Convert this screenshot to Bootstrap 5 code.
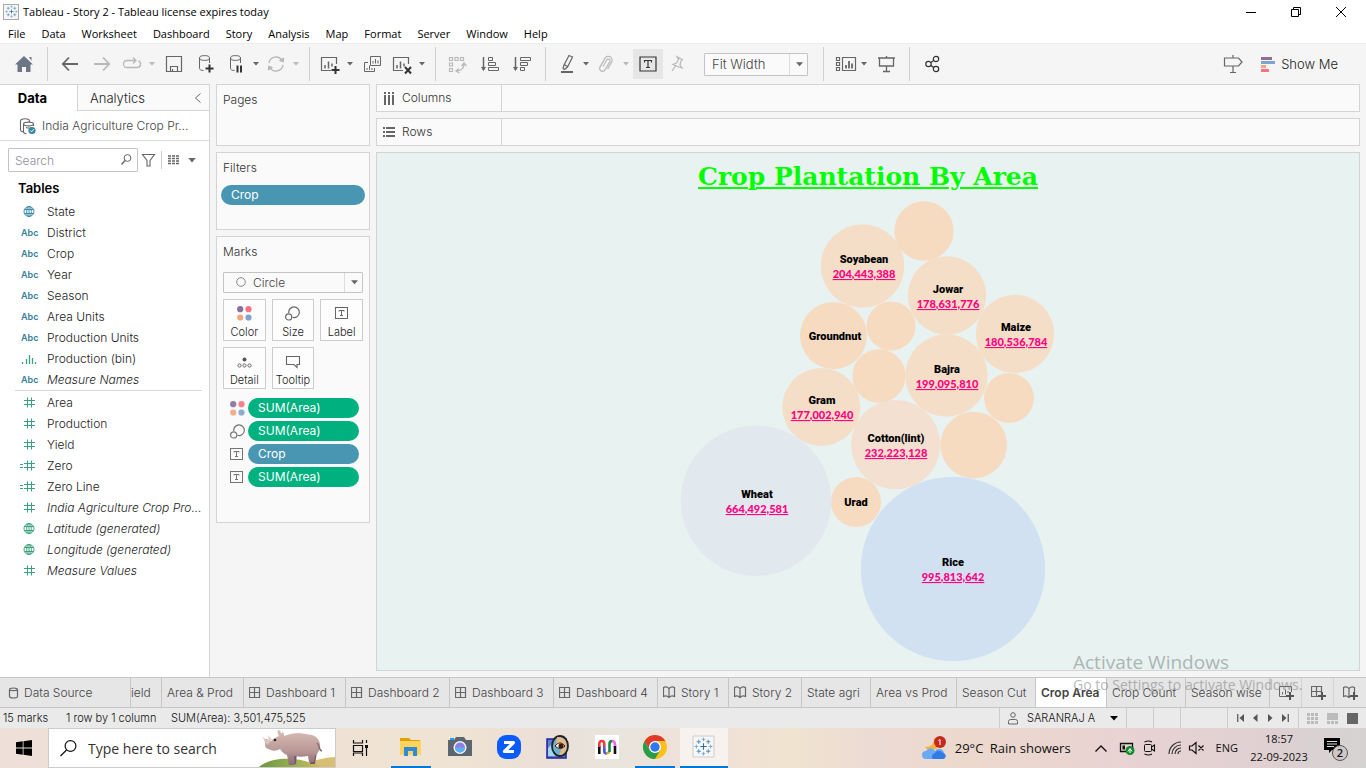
<!DOCTYPE html>
<html lang="en">
<head>
<meta charset="utf-8">
<meta name="viewport" content="width=device-width, initial-scale=1">
<title>Tableau - Story 2</title>
<link href="https://cdn.jsdelivr.net/npm/bootstrap@5.3.0/dist/css/bootstrap.min.css" rel="stylesheet">
<style>
:root{--line:#d4d4d4;--pane:#f5f5f5;--card:#fafafa;--dim:#4996b2;--meas:#00b180;--win:"Open Sans","Noto Sans",sans-serif;--tab:Inter,Roboto,sans-serif}
body{font-family:var(--tab);font-size:12px;font-weight:300;line-height:16px;color:#222;background:var(--pane);height:100vh;overflow:hidden}
svg{display:block;fill:none;stroke:#666;stroke-width:1;overflow:visible;flex:none}
button,.plain{border:0;background:none;padding:0;color:inherit;font:inherit;text-decoration:none}
.winfont{font-family:var(--win);font-weight:400}
.titlebar{height:24px;background:#fff;color:#000;font-size:11px;padding-right:3px}
.titlebar button{width:45px;height:24px}
.menubar{height:19px;background:#fff}
.menubar a{color:#000;text-decoration:none;font-size:11px;line-height:19px}
.toolbar{height:41px;background:var(--pane);border-top:1px solid #ececec}
.toolbar button{height:30px;width:32px;display:flex;align-items:center;justify-content:center}
.toolbar button.slim{width:28px}
.toolbar button.drop{width:12px}
.toolbar button.home{width:47px}
.toolbar button.pressed{width:30px;background:#e6e6e6;margin-left:1px}
.toolbar .off{opacity:.42}
.sep{width:1px;height:34px;background:#d0d0d0;margin:0 6px 0 7px}
.home + .sep{margin-left:0}
.fit{width:104px;height:23px;margin:0 8px 0 13px}
select.pick{appearance:none;width:100%;height:100%;border:1px solid #c4c4c4;border-radius:1px;background:#fafafa;color:#444;padding:0 7px;font-size:13px;font-weight:300;outline:0}
.arrow{right:0;top:1px;bottom:1px;width:19px;border-left:1px solid #dcdcdc;pointer-events:none}
.toolbar button.showme{color:#222;font-size:13px;width:auto;gap:6px;margin-right:28px}
.datapane{width:210px;background:#fff;border-right:1px solid var(--line)}
.dtabs{height:27px}
.dtabs button{height:27px;font-size:13px;color:#222}
.dtabs .t1{width:77px;color:#000;font-weight:700;padding-right:12px;border-top:1px solid var(--line)}
.dtabs .t2{background:var(--card);border:1px solid var(--line);border-right:0;padding-left:12px}
.source{height:30px;border-bottom:1px solid #dedede;padding:0 12px 0 19px;gap:6px;color:#444}
.finder{height:38px;padding:0 8px}
.finder .box{width:130px;height:24px}
.finder input{width:100%;height:100%;border:1px solid #c4c4c4;border-radius:1px;padding:0 24px 0 6px;font-size:12px;font-weight:300;color:#555;outline:0}
.finder input::placeholder{color:#909098;opacity:1}
.finder .lens{right:6px;top:6px}
.bar{width:1px;height:18px;background:#ccc;margin:0 6px}
.tables{font-size:13px;font-weight:600;color:#000;height:22px;line-height:18px;margin:0;padding-left:18px}
.fields{list-style:none;margin:0;padding:0}
.fields li{height:21px;display:flex;align-items:center;padding-right:8px;white-space:nowrap}
.fields .ic{width:47px;padding-left:18px;display:flex;flex:none}
.fields .ic svg{width:21px}
.fields i{font-style:normal;font-weight:600;font-size:9px;line-height:12px;padding-left:3px;color:#3b7f99}
.dimc{stroke:#3b8ba8}.meac{stroke:#3aa27c}
.split{height:1px;background:#d9d9d9;margin:0 7px 1px 15px}
.cards{width:166px;padding:0 6px;gap:6px}
.panel{background:var(--card);border:1px solid var(--line)}
.panel h2{font-size:12px;line-height:16px;font-weight:300;color:#333;margin:0;padding:7px 6px 0}
.pages{height:62px}.filters{height:78px}.marks{height:287px}
.pill{height:20px;border-radius:10px;color:#fff;font-size:12px;line-height:20px;padding:0 10px;text-align:left;font-weight:400}
.pill.dim{background:var(--dim)}.pill.mea{background:var(--meas)}
.filters .pill{margin:9px 4px 0}
.mtype{height:21px;margin:12px 6px 6px}
.mtype select.pick{font-size:12px;padding-left:29px}
.mtype .ring{left:13px;top:5px}
.mgrid{display:grid;grid-template-columns:repeat(3,1fr);gap:6px;margin:0 6px}
.mgrid button{height:42px;border:1px solid #ccc;background:#fdfdfd;font-size:11px;line-height:14px;display:flex;flex-direction:column;align-items:center;justify-content:space-between;padding:6px 0 1px}
.used{list-style:none;margin:9px 10px 0 13px;padding:0;display:grid;gap:3px}
.used li{display:flex;align-items:center;gap:3px}
.used svg{opacity:.9}
.used .pill{flex:1}
.work{gap:6px;padding-right:6px}
.shelf{height:28px;background:var(--card);border:1px solid var(--line)}
.shelf div{width:125px;border-right:1px solid var(--line);padding-left:6px;gap:7px;color:#333}
.viz{background:#e8f3f1;border:1px solid var(--line);margin-bottom:6px}
.viz h1{font:bold 25px/30px "DejaVu Serif",serif;color:#0f0;text-decoration:underline;text-decoration-thickness:2px;text-underline-offset:2px;margin:9px 0 0;text-align:center}
.viz svg{stroke:none;margin:3px auto 0}
.viz .nm{font:900 11px Roboto,sans-serif;fill:#000;text-anchor:middle}
.viz .vl{font:900 11px Lato,sans-serif;fill:#ff0080;text-anchor:middle;text-decoration:underline}
.sheets{display:grid;grid-template-columns:131px 31px 82px 102px 104px 104px 104px 71px 73px 69px 86px 79px 71px 79px 84px 32px 32px 1fr;height:31px;border-top:1px solid #c6c6c6;border-bottom:1px solid #c6c6c6;background:#e6e6e6}
.sheets button{border-right:1px solid #c6c6c6;color:#444;display:flex;align-items:center;gap:5px;padding-left:5px;white-space:nowrap}
.sheets button.on{background:#fff;color:#444;font-weight:600}
.sheets button.src{padding-left:9px;gap:6px}
.sheets button.cut{padding:0}
.sheets button.new{justify-content:center;padding:0;border-color:#d2d2d2}
.status{height:20px;background:#eaeaea;color:#111;font-size:11px;padding-left:3px}
.status .cell{border-left:1px solid #ccc;height:20px}
.s1{width:63px}.s2{width:105px}.user{width:127px}.c27{width:27px}.c47{width:47px}.nav4{width:71px}.view3{width:68px}
.watermark{right:57px;bottom:74px;width:236px;color:#7d8183;opacity:.55;pointer-events:none;font-family:var(--win);font-weight:400}
.watermark b{display:block;font-weight:400;font-size:19px;line-height:28px}
.watermark span{font-size:14px;line-height:18px;display:block}
.taskbar{height:40px;color:#111;background:linear-gradient(90deg,#eedfd8 0,#efe3d3 33%,#ebdfd8 40%,#e8e5dc 45%,#f0e0da 51%,#f0e3cf 58%,#ecdbd5 64%,#ecd9cd 70%,#e9d3d3 82%,#dfd0d2 93%,#d5d3d2 100%)}
.taskbar button{height:40px;display:flex;align-items:center;justify-content:center}
.start{width:48px}.tview{width:48px}
.taskbar .app{width:49px;border-bottom:2px solid transparent}
.taskbar .run{width:40px;margin:0 4px 0 7px;border-color:#0078d7}
.taskbar .run ~ .run{margin:0 5px 0 4px}
.taskbar .act{width:48px;background:#f8f2ef;border-color:#0078d7}
.find{width:288px;height:40px;background:#fff;border:1px solid #ccc}
.find input{border:0;outline:0;width:100%;height:100%;background:none;font-size:14px;padding:0 0 0 39px;color:#222}
.find input::placeholder{color:#333;opacity:1}
.find .glass{left:11px;top:11px}.find .rhino{right:0;bottom:0}
.wx{font-size:13px}
.lang{font-size:11px}
.clock{font-size:11px;line-height:18px;text-align:center;width:74px}
</style>
</head>
<body class="d-flex flex-column">
<svg width="0" height="0" class="position-absolute" aria-hidden="true">
<symbol id="caret" viewBox="0 0 6 4"><path d="M0 0h6L3 3.600z" fill="#666" stroke="none"/></symbol>
<symbol id="globe" viewBox="0 0 21 13"><g transform="translate(6 1)"><circle cx="5" cy="5.500" r="5"/><ellipse cx="5" cy="5.500" rx="2.300" ry="5"/><path d="M.5 3.500h9M.5 7.500h9M5 .5v10"/></g></symbol>
<symbol id="hash" viewBox="0 0 21 13"><path d="M9.500 1.500v10M13.500 1.500v10M6 4.500h11M6 8.500h11"/></symbol>
<symbol id="ehash" viewBox="0 0 21 13"><path d="M9.500 1.500v10M13.500 1.500v10M6 4.500h11M6 8.500h11M2 5.500h3M2 8.500h3"/></symbol>
<symbol id="mark" viewBox="0 0 36 36"><path d="M18 12v12M12 18h12" stroke="#356a93" stroke-width="2"/><path d="M18 1v7M14.500 4.500h7M18 28v7M14.500 31.500h7M1 18h7M4.500 14.500v7M28 18h7M31.500 14.500v7" stroke="#6aa5c9" stroke-width="1.600"/><path d="M9 5v8M5 9h8M27 5v8M23 9h8M9 23v8M5 27h8M27 23v8M23 27h8" stroke="#4b8db5" stroke-width="1.800"/></symbol>
<symbol id="dots" viewBox="0 0 15 15"><g stroke="none"><circle cx="3.200" cy="3.200" r="3.100" fill="#8a6f9c"/><circle cx="11.500" cy="3.200" r="3.100" fill="#f97384"/><circle cx="3.200" cy="11.500" r="3.100" fill="#f4a77c"/><circle cx="11.500" cy="11.500" r="3.100" fill="#7fa3cf"/></g></symbol>
<symbol id="size" viewBox="0 0 15 15"><path d="M3.800 7A5.300 5.300 0 1 1 7.500 11.300" stroke-width="1.200"/><circle cx="3.700" cy="10.900" r="3.100" stroke-width="1.200"/></symbol>
<symbol id="tbox" viewBox="0 0 14 14"><rect x=".5" y="1.500" width="12" height="11"/><path d="M4 5.500v-1h5v1M6.500 4.500v5M5 9.500h3"/></symbol>
<symbol id="dash" viewBox="0 0 12 12"><path d="M.5.5h10v10H.5zM5.500.5v10M.5 5.500h10" stroke-width="1.200"/></symbol>
<symbol id="book" viewBox="0 0 13 13"><path d="M.5 1.500c2-1 4-.5 5.500 1 1.500-1.500 3.500-2 5.500-1v9c-2-1-4-.5-5.500 1-1.500-1.500-3.500-2-5.500-1zM6 2.500v9" stroke-width="1.200"/></symbol>
<symbol id="plus" viewBox="0 0 8 8"><path d="M4 0v8M0 4h8" stroke="#555" stroke-width="2"/></symbol>
</svg>

<header>
<div class="titlebar winfont d-flex align-items-center">
<svg width="15" height="16" class="ms-1 me-1"><rect x="-.5" y=".5" width="15" height="15" fill="#f6f6f6" stroke="#aaa"/><use href="#mark" x="1" y="1" width="13" height="13"/></svg>
<span class="flex-grow-1">Tableau - Story 2 - Tableau license expires today</span>
<button aria-label="Minimise"><svg class="mx-auto" width="10" height="10"><path d="M0 5.500h10" stroke="#000"/></svg></button>
<button aria-label="Restore"><svg class="mx-auto" width="10" height="10"><path d="M.5 2.500h7v7h-7zM2.500 2.500v-2h7v7h-2" stroke="#000"/></svg></button>
<button aria-label="Close"><svg class="mx-auto" width="10" height="10"><path d="M0 0l10 10M10 0L0 10" stroke="#000"/></svg></button>
</div>
<nav class="menubar winfont d-flex" aria-label="Menu">
<div class="d-flex ps-2 gap-3"><a href="#">File</a><a href="#">Data</a><a href="#">Worksheet</a><a href="#">Dashboard</a><a href="#">Story</a><a href="#">Analysis</a><a href="#">Map</a><a href="#">Format</a><a href="#">Server</a><a href="#">Window</a><a href="#">Help</a></div>
</nav>
<div class="toolbar d-flex align-items-center">
<button class="home" aria-label="Start page"><svg width="18" height="16"><path d="M9 0l9 8.500h-2.500V16h-4.500v-5H7v5H2.500V8.500H0zM14 1h2.500v4z" fill="#6b7785" stroke="none"/></svg></button>
<div class="sep"></div>
<button aria-label="Undo"><svg width="16" height="14"><path d="M.8 7H16M7 .5L.8 7 7 13.500" stroke-width="1.800"/></svg></button>
<button class="off" aria-label="Redo"><svg width="16" height="14"><path d="M0 7h15.200M9 .5L15.200 7 9 13.500" stroke-width="1.800"/></svg></button>
<button class="slim off" aria-label="Replay"><svg width="18" height="12"><path d="M6 2.500H4a3.500 3.500 0 0 0 0 7h10a3.500 3.500 0 0 0 1.500-6.700M6 2.500h6.500M10 -.5l3 3-3 3" stroke-width="1.300"/></svg></button>
<button class="drop off" aria-label="Replay options"><svg width="6" height="4"><use href="#caret"/></svg></button>
<button aria-label="Save"><svg width="16" height="16"><path d="M.5.500h15v15H.500zM4.500 15v-4.500h7V15M6.500 13v2" stroke-width="1.200"/></svg></button>
<button aria-label="New data source"><svg width="16" height="18"><ellipse cx="6.500" cy="3" rx="5" ry="2.400"/><path d="M1.500 3v10.500c0 1 1.500 2 4 2M11.500 3v5"/><path d="M11.500 9.500v8M7.500 13.500h8" stroke="#333" stroke-width="2"/></svg></button>
<button class="slim" aria-label="Pause updates"><svg width="16" height="18"><ellipse cx="7.500" cy="3" rx="5" ry="2.400"/><path d="M2.500 3v10.500c0 1 1.500 2 4 2M12.500 3v5"/><path d="M9.500 10.500v7M13 10.500v7" stroke="#333" stroke-width="2"/></svg></button>
<button class="drop" aria-label="Pause options"><svg width="6" height="4"><use href="#caret"/></svg></button>
<button class="slim off" aria-label="Run update"><svg width="18" height="16"><path d="M2 7a7 7 0 0 1 13-2.500M16 9a7 7 0 0 1-13 2.500" stroke-width="1.500"/><path d="M16.800 2l-.5 4-3.800-1.500zM1.200 14l.5-4 3.800 1.500z" fill="#666"/></svg></button>
<button class="drop off" aria-label="Update options"><svg width="6" height="4"><use href="#caret"/></svg></button>
<div class="sep"></div>
<button class="slim" aria-label="New worksheet"><svg width="18" height="17"><path d="M15.500 8V1.500h-15v13H10" stroke-width="1.200"/><path d="M4 9v3.500M7.500 5.500v7M11 7.500v3" stroke-width="1.500"/><path d="M14.500 10v8M10.500 14h8" stroke="#333" stroke-width="2"/></svg></button>
<button class="drop" aria-label="Worksheet options"><svg width="6" height="4"><use href="#caret"/></svg></button>
<button aria-label="Duplicate"><svg width="17" height="16"><path d="M6.500.5h10v9h-10zM4 6.500H.5v9h10V12M9 5v2.500M11.500 3v4.500M14 4.500v3M3 12v2M5.500 9.500V14M8 12v2"/></svg></button>
<button class="slim" aria-label="Clear sheet"><svg width="18" height="17"><path d="M15.500 8V1.500h-15v13H10" stroke-width="1.200"/><path d="M4 9v3.500M7.500 5.500v7M11 7.500v3" stroke-width="1.500"/><path d="M12 11l6 6.500M18 11l-6 6.500" stroke="#333" stroke-width="2"/></svg></button>
<button class="drop" aria-label="Clear options"><svg width="6" height="4"><use href="#caret"/></svg></button>
<div class="sep"></div>
<button class="off" aria-label="Swap rows and columns"><svg width="18" height="17"><path d="M.5 1.500h3v3h-3zM6 1.500h3v3H6zM11.500 1.500h3v3h-3zM.5 7h3v3h-3zM.5 12.500h3v3h-3zM15 8c0 4-3 6.500-7 7M12.500 10l2.500-3 2.500 3M10 12.500L7 15l3.500 2" stroke-width="1.200"/></svg></button>
<button aria-label="Sort ascending"><svg width="18" height="16"><path d="M2.500 1v13" stroke-width="1.500"/><path d="M0 11h5l-2.500 4z" fill="#666" stroke="none"/><path d="M7.500 1.500h4v3h-4zM7.500 6.500h7v3h-7zM7.500 11.500h10v3h-10z"/></svg></button>
<button aria-label="Sort descending"><svg width="18" height="16"><path d="M2.500 1v13" stroke-width="1.500"/><path d="M0 11h5l-2.500 4z" fill="#666" stroke="none"/><path d="M7.500 1.500h10v3h-10zM7.500 6.500h7v3h-7zM7.500 11.500h4v3h-4z"/></svg></button>
<div class="sep"></div>
<button class="slim" aria-label="Highlight"><svg width="14" height="18"><path d="M10 .5l3.500 1.500-5 10-3 2.500-1.500-1 1-3.500zM5 9.500l3.500 2" stroke-width="1.200"/><path d="M2 17h12" stroke-width="2"/></svg></button>
<button class="drop" aria-label="Highlight options"><svg width="6" height="4"><use href="#caret"/></svg></button>
<button class="slim off" aria-label="Group members"><svg width="14" height="16"><path d="M4 10.500l4-7a1.800 1.800 0 0 1 3 1.800l-5 8.500a2.800 2.800 0 0 1-5-2.700l5-9a3.800 3.800 0 0 1 6.500 4l-4 7" stroke-width="1.200"/></svg></button>
<button class="drop off" aria-label="Group options"><svg width="6" height="4"><use href="#caret"/></svg></button>
<button class="pressed" aria-label="Show mark labels"><svg width="18" height="16"><path d="M1 1h16v14H1z" stroke="#333" stroke-width="1.200"/><path d="M5.500 6.500v-2h7v2M9 4.500v7M7 11.500h4" stroke="#333" stroke-width="1.200"/></svg></button>
<button class="slim off" aria-label="Fix axes"><svg width="14" height="16"><path d="M7 .8l5.500 3-1.500 1-1 4.200 2 3-4.500-1.500L3 8.500l3.500-1.500 2-3.500zM5.500 10l-3.500 5" stroke-width="1.200"/></svg></button>
<div class="fit position-relative"><select class="pick" aria-label="Fit"><option>Fit Width</option></select><span class="arrow position-absolute d-flex align-items-center justify-content-center"><svg width="7" height="5"><use href="#caret"/></svg></span></div>
<div class="sep"></div>
<button class="slim" aria-label="Show or hide cards"><svg width="18" height="16"><path d="M1.500 1.500h3v3h-3zM1.500 6.500h3v3h-3zM1.500 11.500h3v3h-3zM7.500 1.500h13v13h-13z" stroke-width="1.200"/><path d="M11 9v3.500M14 5v7.500M17 7.500v5" stroke-width="1.800"/></svg></button>
<button class="drop" aria-label="Card options"><svg width="6" height="4"><use href="#caret"/></svg></button>
<button aria-label="Presentation mode"><svg width="17" height="16"><path d="M0 2h17M1.500 2v8h14V2M8.500 0v2M8.500 10v5M5 15.500h7" stroke-width="1.300"/></svg></button>
<div class="sep"></div>
<button aria-label="Share"><svg width="15" height="16"><circle cx="3.500" cy="8" r="2.700" stroke="#333" stroke-width="1.200"/><circle cx="11" cy="3" r="2.700" stroke="#333" stroke-width="1.200"/><circle cx="11" cy="13" r="2.700" stroke="#333" stroke-width="1.200"/><path d="M5.800 6.500l3-2M5.800 9.500l3 2" stroke="#333" stroke-width="1.200"/></svg></button>
<button class="ms-auto me-2" aria-label="Guide"><svg width="18" height="18"><path d="M.5 3h14l3.500 4-3.500 4H.5zM9 0v3M9 11v7M6 17.500h6" stroke-width="1.200"/></svg></button>
<button class="showme ps-1"><svg width="14" height="15"><path d="M0 1.500h11" stroke="#8b6f98" stroke-width="3"/><path d="M0 5.500h14" stroke="#7ea4d2" stroke-width="3"/><path d="M0 9.500h5" stroke="#f2a77b" stroke-width="3"/><path d="M0 13.500h8" stroke="#fa7183" stroke-width="3"/></svg>Show Me</button>
</div>
</header>

<main class="d-flex flex-grow-1">
<aside class="datapane">
<div class="dtabs d-flex"><button class="t1">Data</button><button class="t2 d-flex flex-grow-1 align-items-center">Analytics<svg class="ms-auto me-2" width="6" height="10"><path d="M5.500.5L.5 5l5 4.500"/></svg></button></div>
<div class="source d-flex align-items-center"><svg width="17" height="16"><path d="M1.500 3c0-3 9-3 9 0v1M1.500 3v9c0 1 1 1.500 2.500 2M4.500 6c0-2.500 10-2.500 10 0s-10 2.500-10 0v8c0 1 1 1.500 3 1.800M14.500 6v2M7 9.500c2 .6 4 .6 5 .3" stroke-width="1.100"/><circle cx="13" cy="12.500" r="3.600" fill="#3b86a3" stroke="none"/><path d="M11.300 12.500l1.300 1.300 2.200-2.500" stroke="#fff"/></svg><span>India Agriculture Crop Pr...</span></div>
<div class="finder d-flex align-items-center">
<div class="box position-relative"><input type="text" placeholder="Search" aria-label="Search fields"><svg class="lens position-absolute" width="11" height="11"><circle cx="6.500" cy="4" r="3.400"/><path d="M4 6.500L.5 10.500" stroke-width="1.300"/></svg></div>
<button class="ms-1" aria-label="Filter fields"><svg width="13" height="13"><path d="M.5.5h12L8 6.500v5.500H5V6.500z" stroke-width="1.100"/></svg></button>
<span class="bar"></span>
<button class="d-flex align-items-center gap-2" aria-label="View options"><svg width="12" height="10"><path d="M0 1h12M0 3.500h12M0 6h12M0 8.500h12" stroke-dasharray="3 1" stroke-width="1.300"/></svg><svg width="8" height="5"><use href="#caret"/></svg></button>
</div>
<h2 class="tables">Tables</h2>
<ul class="fields">
<li><span class="ic"><svg class="dimc" height="13"><use href="#globe" height="13" width="21"/></svg></span>State</li>
<li><span class="ic"><i>Abc</i></span>District</li>
<li><span class="ic"><i>Abc</i></span>Crop</li>
<li><span class="ic"><i>Abc</i></span>Year</li>
<li><span class="ic"><i>Abc</i></span>Season</li>
<li><span class="ic"><i>Abc</i></span>Area Units</li>
<li><span class="ic"><i>Abc</i></span>Production Units</li>
<li><span class="ic"><svg class="meac" height="13"><path d="M4.500 10v2M8.500 7v5M11.500 3v9M14.500 6v6M17.500 10v2" stroke-width="1.300"/></svg></span>Production (bin)</li>
<li class="fst-italic"><span class="ic"><i>Abc</i></span>Measure Names</li>
</ul>
<div class="split"></div>
<ul class="fields">
<li><span class="ic"><svg class="meac" height="13"><use href="#hash" height="13" width="21"/></svg></span>Area</li>
<li><span class="ic"><svg class="meac" height="13"><use href="#hash" height="13" width="21"/></svg></span>Production</li>
<li><span class="ic"><svg class="meac" height="13"><use href="#hash" height="13" width="21"/></svg></span>Yield</li>
<li><span class="ic"><svg class="meac" height="13"><use href="#ehash" height="13" width="21"/></svg></span>Zero</li>
<li><span class="ic"><svg class="meac" height="13"><use href="#ehash" height="13" width="21"/></svg></span>Zero Line</li>
<li class="fst-italic"><span class="ic"><svg class="meac" height="13"><use href="#hash" height="13" width="21"/></svg></span>India Agriculture Crop Pro...</li>
<li class="fst-italic"><span class="ic"><svg class="meac" height="13"><use href="#globe" height="13" width="21"/></svg></span>Latitude (generated)</li>
<li class="fst-italic"><span class="ic"><svg class="meac" height="13"><use href="#globe" height="13" width="21"/></svg></span>Longitude (generated)</li>
<li class="fst-italic"><span class="ic"><svg class="meac" height="13"><use href="#hash" height="13" width="21"/></svg></span>Measure Values</li>
</ul>
</aside>

<section class="cards d-flex flex-column">
<div class="panel pages"><h2>Pages</h2></div>
<div class="panel filters d-flex flex-column"><h2>Filters</h2><button class="pill dim">Crop</button></div>
<div class="panel marks"><h2>Marks</h2>
<div class="mtype position-relative"><select class="pick" aria-label="Mark type"><option>Circle</option></select><svg class="ring position-absolute" width="10" height="10"><circle cx="5" cy="5" r="4.300" stroke="#888"/></svg><span class="arrow position-absolute d-flex align-items-center justify-content-center"><svg width="7" height="5"><use href="#caret"/></svg></span></div>
<div class="mgrid">
<button><svg width="15" height="15"><use href="#dots"/></svg>Color</button>
<button><svg width="15" height="15"><use href="#size"/></svg>Size</button>
<button><svg width="14" height="14"><use href="#tbox"/></svg>Label</button>
<button><svg width="15" height="15"><circle cx="7.500" cy="5.500" r="2" fill="#555" stroke="none"/><circle cx="2.500" cy="11.500" r="1.600"/><circle cx="7.500" cy="11.500" r="1.600"/><circle cx="12.500" cy="11.500" r="1.600"/></svg>Detail</button>
<button><svg width="14" height="15"><path d="M.5 2.500h13v8H11v3l-3-3H.5z" stroke-width="1.100"/></svg>Tooltip</button>
</div>
<ul class="used">
<li><svg width="15" height="15"><use href="#dots"/></svg><button class="pill mea">SUM(Area)</button></li>
<li><svg width="15" height="15"><use href="#size"/></svg><button class="pill mea">SUM(Area)</button></li>
<li><svg width="15" height="14"><use href="#tbox" width="14"/></svg><button class="pill dim">Crop</button></li>
<li><svg width="15" height="14"><use href="#tbox" width="14"/></svg><button class="pill mea">SUM(Area)</button></li>
</ul>
</div>
</section>

<section class="work d-flex flex-column flex-grow-1">
<div class="shelf d-flex"><div class="d-flex align-items-center"><svg width="12" height="13"><path d="M2 0v2M6 0v2M10 0v2M2 3v10M6 3v10M10 3v10" stroke-width="2"/></svg>Columns</div></div>
<div class="shelf d-flex"><div class="d-flex align-items-center"><svg width="12" height="12"><path d="M0 2h2M0 6h2M0 10h2M3 2h9M3 6h9M3 10h9" stroke-width="2"/></svg>Rows</div></div>
<div class="viz flex-grow-1">
<h1>Crop Plantation By Area</h1>
<svg width="400" height="470" viewBox="668 195 400 470" role="img" aria-label="Crop plantation by area">
<g fill="#f6dbc0"><circle cx="924" cy="231" r="29.700"/><circle cx="833.500" cy="335.500" r="33.500"/><circle cx="891" cy="326" r="24.500"/><circle cx="879" cy="376" r="26.700"/><circle cx="1009" cy="398" r="25"/><circle cx="973.700" cy="445" r="33.300"/><circle cx="856" cy="502" r="25"/></g>
<g fill="#f5dec8"><circle cx="862.500" cy="266" r="41.800"/><circle cx="947" cy="295.500" r="39.200"/><circle cx="1015" cy="334" r="39.200"/><circle cx="946.500" cy="375.500" r="41.200"/><circle cx="821.300" cy="407" r="39"/></g>
<circle cx="895.700" cy="444.700" r="44.600" fill="#f4e0d0"/><circle cx="756" cy="500.700" r="75.300" fill="#e1e8ee"/><circle cx="953" cy="569" r="92.200" fill="#d2e1f2"/>
<text class="nm" x="864" y="263">Soyabean</text><text class="vl" x="864" y="278">204,443,388</text>
<text class="nm" x="948" y="293">Jowar</text><text class="vl" x="948" y="308">178,631,776</text>
<text class="nm" x="1016" y="331">Maize</text><text class="vl" x="1016" y="346">180,536,784</text>
<text class="nm" x="835" y="340">Groundnut</text>
<text class="nm" x="947" y="373">Bajra</text><text class="vl" x="947" y="388">199,095,810</text>
<text class="nm" x="822" y="404">Gram</text><text class="vl" x="822" y="419">177,002,940</text>
<text class="nm" x="896" y="442">Cotton(lint)</text><text class="vl" x="896" y="457">232,223,128</text>
<text class="nm" x="757" y="498">Wheat</text><text class="vl" x="757" y="513">664,492,581</text>
<text class="nm" x="856" y="506">Urad</text>
<text class="nm" x="953" y="566">Rice</text><text class="vl" x="953" y="581">995,813,642</text>
</svg>
</div>
</section>
</main>

<footer class="position-relative">
<div class="sheets">
<button class="src"><svg width="9" height="12"><path d="M.5 2.500c0-2 8-2 8 0v7c0 2-8 2-8 0zM.5 2.500c0 1.500 8 1.500 8 0" stroke-width="1.200"/></svg>Data Source</button>
<button class="cut">ield</button>
<button>Area &amp; Prod</button>
<button><svg width="12" height="12"><use href="#dash"/></svg>Dashboard 1</button>
<button><svg width="12" height="12"><use href="#dash"/></svg>Dashboard 2</button>
<button><svg width="12" height="12"><use href="#dash"/></svg>Dashboard 3</button>
<button><svg width="12" height="12"><use href="#dash"/></svg>Dashboard 4</button>
<button><svg width="13" height="13"><use href="#book"/></svg>Story 1</button>
<button><svg width="13" height="13"><use href="#book"/></svg>Story 2</button>
<button>State agri</button>
<button>Area vs Prod</button>
<button>Season Cut</button>
<button class="on">Crop Area</button>
<button>Crop Count</button>
<button>Season wise</button>
<button class="new" aria-label="New worksheet"><svg width="14" height="13"><path d="M12.500 6V.5H.5v10H8M3.500 6v2.500M6.500 3.500v5M9 5v2"/><use href="#plus" x="7" y="6" width="8" height="8"/></svg></button>
<button class="new" aria-label="New dashboard"><svg width="14" height="13"><use href="#dash" width="12" height="12"/><use href="#plus" x="7" y="6" width="8" height="8"/></svg></button>
<button class="new border-0" aria-label="New story"><svg width="14" height="13"><use href="#book" width="13" height="13"/><use href="#plus" x="7" y="6" width="8" height="8"/></svg></button>
</div>
<div class="status d-flex align-items-center">
<span class="s1">15 marks</span><span class="s2">1 row by 1 column</span><span class="flex-grow-1">SUM(Area): 3,501,475,525</span>
<button class="cell user d-flex align-items-center ps-1"><svg class="ms-1" width="11" height="13"><circle cx="5" cy="3" r="2.300"/><path d="M.5 12V9.500q0-2 2-2h5q2 0 2 2V12z"/></svg><span class="ps-2 flex-grow-1 text-start">SARANRAJ A</span><svg class="me-2" width="8" height="5"><path d="M0 0h8L4 4.500z" fill="#000" stroke="none"/></svg></button>
<span class="cell c27"></span><span class="cell c27"></span><span class="cell c47"></span>
<div class="cell nav4 d-flex align-items-center justify-content-around px-1">
<button aria-label="First"><svg width="7" height="8"><path d="M.7 0v8" stroke-width="1.400"/><path d="M7 0v8L2.500 4z" fill="#555" stroke="none"/></svg></button>
<button aria-label="Previous"><svg width="5" height="8"><path d="M4.500 0v8L0 4z" fill="#555" stroke="none"/></svg></button>
<button aria-label="Next"><svg width="5" height="8"><path d="M0 0v8l4.500-4z" fill="#555" stroke="none"/></svg></button>
<button aria-label="Last"><svg width="7" height="8"><path d="M6.300 0v8" stroke-width="1.400"/><path d="M0 0v8l4.500-4z" fill="#555" stroke="none"/></svg></button></div>
<div class="cell view3 d-flex align-items-center justify-content-between ps-2 pe-2">
<button aria-label="Sheet sorter"><svg width="11" height="11"><path d="M0 1.500h11M0 5.500h11M0 9.500h11" stroke="#bbb" stroke-width="3" stroke-dasharray="3 1"/></svg></button>
<button aria-label="Filmstrip"><svg width="11" height="11"><path d="M0 3.500h11" stroke="#bbb" stroke-width="7"/><path d="M0 9.500h11" stroke="#bbb" stroke-width="3" stroke-dasharray="3 1"/></svg></button>
<button aria-label="Tabs"><svg width="11" height="11"><path d="M0 0h11v11H0z" fill="#666" stroke="none"/></svg></button></div>
</div>
<div class="watermark position-absolute"><b>Activate Windows</b><span class="text-nowrap">Go to Settings to activate Windows.</span></div>

<div class="taskbar winfont d-flex align-items-center">
<button class="start" aria-label="Start"><svg width="16" height="16"><path d="M0 2.300l6.700-1v6.300H0zM7.500 1.200L16 0v7.600H7.500zM0 8.400h6.700v6.300L0 13.700zM7.500 8.400H16V16l-8.500-1.200z" fill="#000" stroke="none"/></svg></button>
<div class="find position-relative"><svg class="glass position-absolute" width="17" height="17"><circle cx="10.500" cy="6" r="5.400" stroke="#111" stroke-width="1.200"/><path d="M6.500 10L.5 16" stroke="#111" stroke-width="1.300"/></svg><input type="text" placeholder="Type here to search" aria-label="Search">
<svg class="rhino position-absolute" width="76" height="38"><defs><linearGradient id="rh" x2="0" y2="1"><stop offset="0" stop-color="#d9bdb5"/><stop offset=".6" stop-color="#b99896"/><stop offset="1" stop-color="#8a6a74"/></linearGradient><linearGradient id="hl" x2="1"><stop offset="0" stop-color="#6f9440"/><stop offset=".55" stop-color="#9ab052"/><stop offset="1" stop-color="#d9b95e"/></linearGradient></defs><g stroke="none"><path d="M40 38c10-6 24-9 36-10v10z" fill="#d9bd72"/><path d="M0 38c10-9 30-10 46-6 8 2 14 4 18 6z" fill="url(#hl)"/><path d="M34 22l-2 13h5l1-12zM54 22l-3 13h5l2-12z" fill="#75566a"/><path d="M8 10c1 1 3 2 4 2 3-3 6-4 8-5-1-2-2-4-1-6 2 0 3 2 3 4 1-1 1-2 2-2 1 1 1 3 1 4 5-2 10-3 15-3 5 1 9 1 13 2 6 2 9 7 8 13-1 4-3 6-5 8l-1 6h-5l-1-6c-5 1-9 1-14 0l1 9h-6l-2-10c-3-1-5-3-7-6-3 2-7 2-9 1-3-1-6-2-6-5 0-2 0-4-1-6z" fill="url(#rh)"/><path d="M58 14c3 2 1 7 5 8" stroke="#8a6a74" stroke-width="1.500" fill="none"/><path d="M3 7l5 9 4-4c-4 0-6-2-9-5zM9 6l1 6 3-1z" fill="#dcc5bf"/><circle cx="16" cy="11" r="1.300" fill="#222"/></g></svg></div>
<button class="tview" aria-label="Task view"><svg width="17" height="16"><path d="M1.500 0v3h9V0M1.500 5.500h9v6h-9zM1.500 16v-3h9v3M14.500 0v3M14.500 8v8" stroke="#111" stroke-width="1.200"/><path d="M13 5h3v3h-3z" fill="#111" stroke="none"/></svg></button>
<button class="app run" aria-label="File Explorer"><svg width="22" height="18"><g stroke="none"><path d="M0 0h9l2 2h9v4H0z" fill="#e0a100"/><path d="M0 3h21v14H0z" fill="#ffd35c"/><path d="M4 18V9h13v9h-4v-5H8v5z" fill="#2f8ad8"/></g></svg></button>
<button class="app" aria-label="Camera"><svg width="24" height="20"><g stroke="none"><path d="M2 1h4v3H2z" fill="#1aa0e8"/><path d="M8 0h8l2 3h6v16H0V3h6z" fill="#5c6670"/><circle cx="12" cy="10.500" r="6.500" fill="#f2f2f2"/><circle cx="12" cy="10.500" r="5" fill="#8e7fe8"/><path d="M7 10.500a5 5 0 0 0 10 0z" fill="#5bb0f0"/></g></svg></button>
<button class="app" aria-label="Zoom"><svg width="24" height="24"><rect width="24" height="24" rx="9" fill="#0b5cff" stroke="none"/><path d="M7 7.500h9.500L7.500 16.500H17" stroke="#fff" stroke-width="3.200" stroke-linejoin="round"/></svg></button>
<button class="app" aria-label="Image viewer"><svg width="24" height="24"><path d="M1 4h19v19H1z" fill="#5c80d8" stroke="#22229a" stroke-width="1.500"/><path d="M2 13l6-6 3 14H2z" fill="#9fd8ea" stroke="none"/><ellipse cx="14" cy="11" rx="8" ry="10" fill="#6fb2cf" stroke="#222" stroke-width="1.800"/><path d="M11 2c8 0 11 5 9 13-2 4-4 5-7 5 3-5 3-8-3-9z" fill="#e8b98a" stroke="none"/><path d="M9 11c3-4 7-4 10 0-3 3-7 3-10 0z" fill="#f8efe0" stroke="#3b1a0b"/><circle cx="15" cy="11" r="2.500" fill="#3b1a0b" stroke="none"/></svg></button>
<button class="app" aria-label="Miro"><svg width="24" height="24"><path d="M0 0h24v24H0z" fill="#fff" stroke="none"/><g stroke-width="2.600"><path d="M4.300 19v-8" stroke="#111"/><path d="M4.300 12V9q0-3 2.500-3t2.500 3v2" stroke="#f0403c"/><path d="M9.300 11v4" stroke="#7d4fd0"/><path d="M9.300 14v2q0 2.500 2.600 2.500" stroke="#3e5bea"/><path d="M11.500 18.300q2.300 0 2.800-2" stroke="#f7a21b"/><path d="M14.500 17V9q0-3 2.800-3" stroke="#16893f"/><path d="M17 6q3 0 3 4v2" stroke="#f36ce8"/><path d="M20 11v8" stroke="#111"/></g></svg></button>
<button class="app run" aria-label="Chrome"><svg width="24" height="24"><g stroke="none"><circle cx="12" cy="12" r="12" fill="#fbc116"/><path d="M1.600 6a12 12 0 0 1 20.800 0H12L7 15z" fill="#dd3b2b"/><path d="M1.600 6a12 12 0 0 0 10.400 18l5.200-9H6.800z" fill="#2a9d4b"/><circle cx="12" cy="12" r="6" fill="#fff"/><circle cx="12" cy="12" r="4.700" fill="#2e79f0"/></g></svg></button>
<button class="app act" aria-label="Tableau"><svg width="24" height="24"><path d="M1 1h21v21H1z" fill="#f7f7f7" stroke="#ccc"/><use href="#mark" x="2" y="2" width="19" height="19"/></svg></button>
<button class="ms-auto gap-2" aria-label="Weather"><svg width="25" height="24"><g stroke="none"><path d="M12 2c0 6-3 9-9 9 3 4 9 4 12 1s2-8-3-10z" fill="#f6b13c"/><path d="M4 23a4 4 0 0 1 0-8 5 5 0 0 1 9 0 5 5 0 0 1 9 2 3.500 3.500 0 0 1-1 6z" fill="#6aa9f4"/><path d="M11 23c-2-2-1-5 2-6 1-3 6-3 8 0 4 1 3 6 0 6z" fill="#2f7ce8"/><circle cx="18" cy="6" r="6" fill="#c42b1c"/></g><path d="M16.500 4.500L18 3.500V9" stroke="#fff"/></svg><span class="wx">29°C&ensp;Rain showers</span></button>
<button class="ms-4" aria-label="Show hidden icons"><svg width="12" height="7"><path d="M.5 6.500L6 1l5.500 5.500" stroke="#111" stroke-width="1.400"/></svg></button>
<button class="ms-2 ps-1" aria-label="Battery"><svg width="16" height="14"><path d="M1.500 2.500h12v8h-12z" stroke="#111" stroke-width="1.300"/><path d="M3.500 4.500H6v4H3.500z" fill="#111" stroke="none"/><circle cx="11" cy="9.500" r="4.500" fill="#138a2c" stroke="none"/><path d="M9 10.500l2-3 2 3M11 8v4" stroke="#fff"/></svg></button>
<button class="ms-2" aria-label="Meet now"><svg width="13" height="16"><rect x="1.500" y="4.500" width="7" height="7" rx="1" stroke="#111"/><path d="M8.500 7l3-2v6l-3-2M1.500 2q4-2 7.500 0M1.500 14q4 2 7.500 0" stroke="#111" stroke-width="1.100"/></svg></button>
<button class="ms-2 ps-1" aria-label="Network"><svg width="13" height="14"><path d="M1 13A12 12 0 0 1 13 1M4 13a9 9 0 0 1 9-9M7 13a6 6 0 0 1 6-6M10 13a3 3 0 0 1 3-3" stroke="#333" stroke-width="1.200"/></svg></button>
<button class="ms-2" aria-label="Volume muted"><svg width="15" height="12"><path d="M.5 4v4h2.500l4 3.500v-11L3 4zM9.500 3.500l5 5M14.500 3.500l-5 5" stroke="#111" stroke-width="1.200"/></svg></button>
<button class="ms-2 ps-1 lang" aria-label="Language">ENG</button>
<button class="clock d-block ms-1"><span>18:57</span><br><span>22-09-2023</span></button>
<button class="ms-2 me-3" aria-label="Notifications"><svg width="26" height="24"><path d="M0 2h16v12H8l-3 3v-3H0z" fill="#000" stroke="none"/><path d="M3 5.500h10M3 8h10M3 10.500h7" stroke="#ddd"/><circle cx="16" cy="17" r="7.500" fill="#cfc8c8" stroke="#555"/><text x="16" y="21" text-anchor="middle" font-size="11" font-weight="600" fill="#111" stroke="none">2</text></svg></button>
</div>
</footer>
<script src="https://cdn.jsdelivr.net/npm/bootstrap@5.3.0/dist/js/bootstrap.bundle.min.js"></script>
</body>
</html>
